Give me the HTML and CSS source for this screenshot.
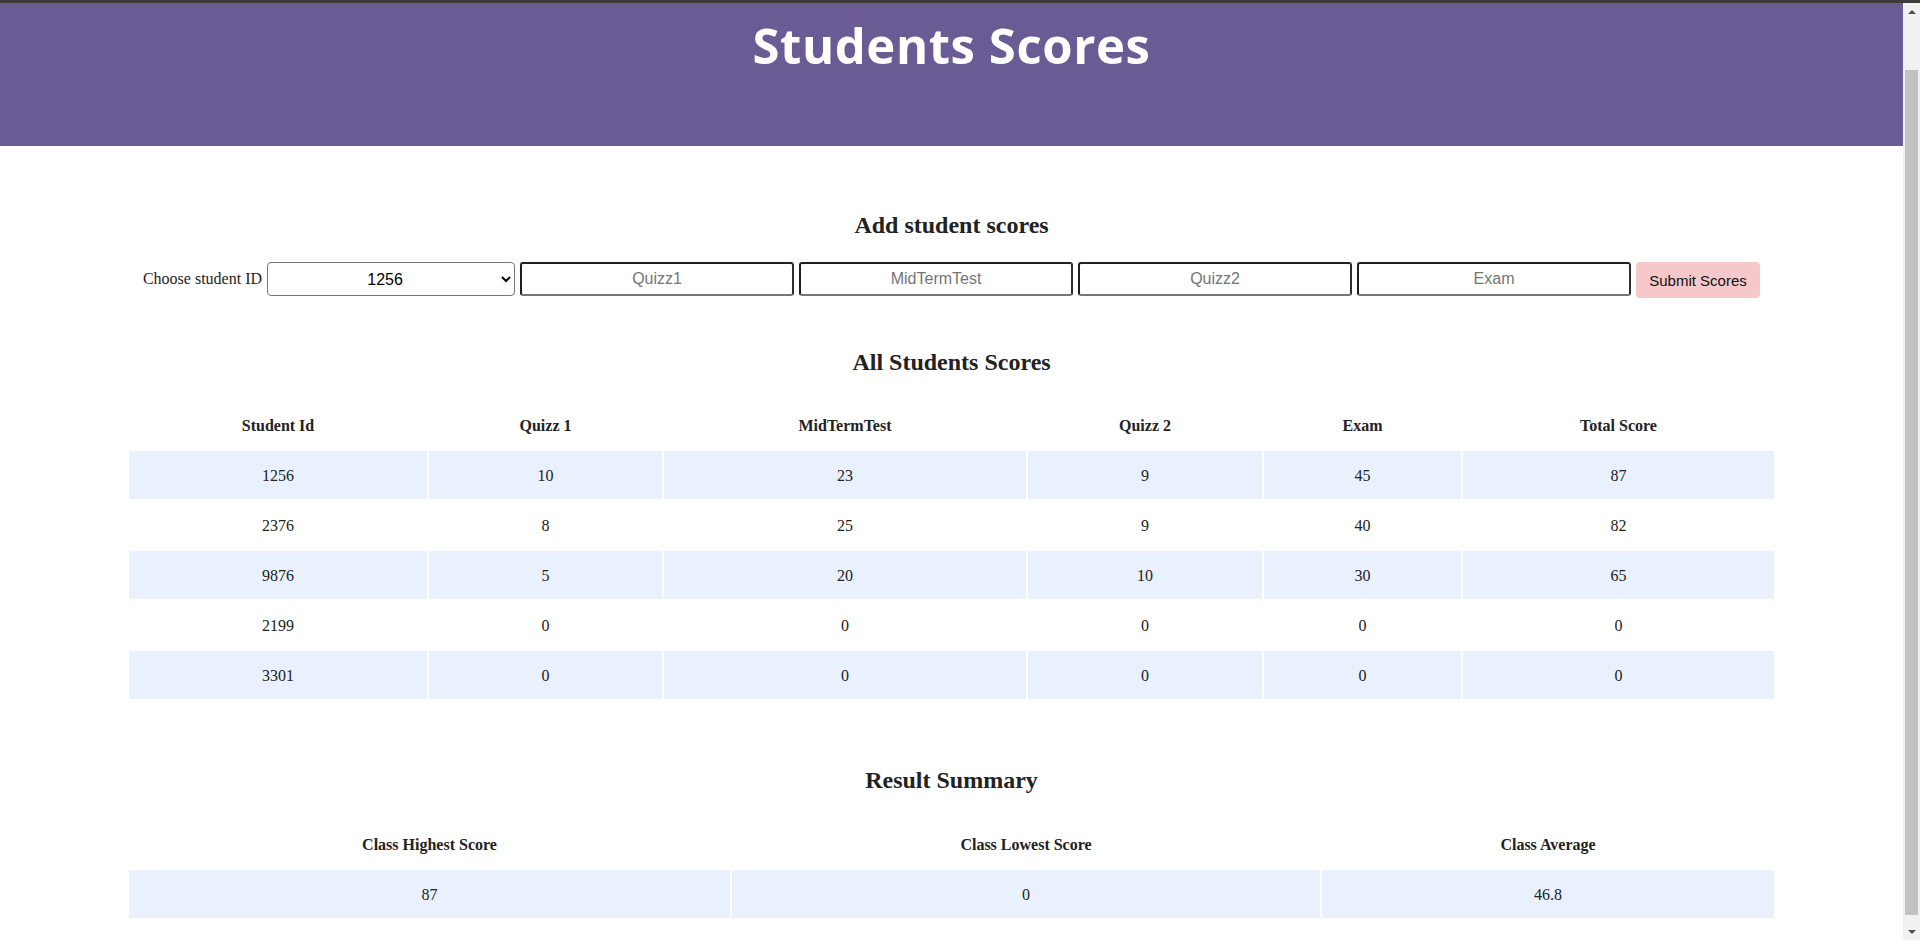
FILE: index.html
```html
<!DOCTYPE html>
<html lang="en">
<head>
<meta charset="utf-8">
<title>Students Scores</title>
<link rel="stylesheet" href="styles.css">
</head>
<body>
<div class="topbar"></div>
<div class="frame">
  <div class="page">
    <header class="banner">
      <h1 class="banner-title">Students Scores</h1>
    </header>
    <main class="content">
      <h2 class="section-title first">Add student scores</h2>
      <form class="score-form">
        <label class="form-label" for="sid">Choose student ID</label>
        <select id="sid" class="form-select">
          <option>1256</option>
          <option>2376</option>
          <option>9876</option>
          <option>2199</option>
          <option>3301</option>
        </select>
        <input class="form-input" type="text" placeholder="Quizz1">
        <input class="form-input" type="text" placeholder="MidTermTest">
        <input class="form-input" type="text" placeholder="Quizz2">
        <input class="form-input" type="text" placeholder="Exam">
        <button class="form-button" type="button">Submit Scores</button>
      </form>

      <h2 class="section-title second">All Students Scores</h2>
      <table class="data-table scores">
        <thead>
          <tr>
            <th class="c1">Student Id</th>
            <th class="c2">Quizz 1</th>
            <th class="c3">MidTermTest</th>
            <th class="c4">Quizz 2</th>
            <th class="c5">Exam</th>
            <th class="c6">Total Score</th>
          </tr>
        </thead>
        <tbody>
          <tr><td>1256</td><td>10</td><td>23</td><td>9</td><td>45</td><td>87</td></tr>
          <tr><td>2376</td><td>8</td><td>25</td><td>9</td><td>40</td><td>82</td></tr>
          <tr><td>9876</td><td>5</td><td>20</td><td>10</td><td>30</td><td>65</td></tr>
          <tr><td>2199</td><td>0</td><td>0</td><td>0</td><td>0</td><td>0</td></tr>
          <tr><td>3301</td><td>0</td><td>0</td><td>0</td><td>0</td><td>0</td></tr>
        </tbody>
      </table>

      <h2 class="section-title third">Result Summary</h2>
      <table class="data-table summary">
        <thead>
          <tr>
            <th class="s1">Class Highest Score</th>
            <th class="s2">Class Lowest Score</th>
            <th class="s3">Class Average</th>
          </tr>
        </thead>
        <tbody>
          <tr><td>87</td><td>0</td><td>46.8</td></tr>
        </tbody>
      </table>
    </main>
  </div>
  <div class="scrollbar">
    <div class="sb-btn"><span class="sb-up"></span></div>
    <div class="sb-track"><div class="sb-thumb"></div></div>
    <div class="sb-btn"><span class="sb-down"></span></div>
  </div>
</div>
</body>
</html>
```

FILE: styles.css
```css
html, body {
  margin: 0;
  padding: 0;
  height: 100%;
  overflow: hidden;
  background: #ffffff;
}

body {
  font-family: "Liberation Serif", "Times New Roman", serif;
  font-size: 16px;
  color: #222222;
  display: flex;
  flex-direction: column;
}

.topbar {
  height: 3px;
  background: #3b3b3b;
  flex: none;
}

.frame {
  flex: 1;
  display: flex;
  min-height: 0;
}

.page {
  flex: 1;
  min-width: 0;
}

.banner {
  height: 143px;
  background: #6b5b95;
  padding-top: 9px;
  box-sizing: border-box;
}

.banner-title {
  margin: 0;
  text-align: center;
  color: #ffffff;
  font-family: "Open Sans", "DejaVu Sans", sans-serif;
  font-weight: 700;
  font-size: 49px;
  line-height: 66px;
  letter-spacing: 0.6px;
}

.content {
  display: flex;
  flex-direction: column;
  align-items: center;
}

.section-title {
  margin: 0;
  font-size: 24px;
  line-height: 28px;
  font-weight: 700;
  text-align: center;
}

.section-title.first { margin-top: 65px; }
.section-title.second { margin-top: 50px; }
.section-title.third { margin-top: 65px; }

.score-form {
  margin-top: 23px;
  display: flex;
  justify-content: center;
  align-items: flex-start;
  gap: 5px;
}

.form-label {
  line-height: 34px;
  font-size: 16px;
}

.form-select {
  width: 248px;
  height: 34px;
  box-sizing: border-box;
  border: 1px solid #767676;
  border-radius: 4px;
  background: #ffffff;
  font-family: "Liberation Sans", Arial, sans-serif;
  font-size: 16px;
  color: #000000;
  text-align: center;
  text-align-last: center;
  padding: 0 4px;
}

.form-input {
  width: 274px;
  height: 34px;
  box-sizing: border-box;
  border-style: solid;
  border-width: 2px;
  border-color: #1f1f1f #2e2e2e #767676 #1f1f1f;
  border-radius: 3px;
  background: #ffffff;
  font-family: "Liberation Sans", Arial, sans-serif;
  font-size: 16px;
  text-align: center;
  padding: 0 4px;
}

.form-input::placeholder {
  color: #757575;
}

.form-button {
  width: 124px;
  height: 36px;
  border: none;
  border-radius: 4px;
  background: #f7c8c9;
  color: #111111;
  font-family: "Liberation Sans", Arial, sans-serif;
  font-size: 15px;
  padding: 0;
}

.data-table {
  border-spacing: 2px;
  table-layout: fixed;
  width: 1649px;
  margin-top: 23px;
}

.data-table.summary {
  margin-top: 24px;
}

.data-table th,
.data-table td {
  height: 47px;
  padding: 1px 0 0 0;
  text-align: center;
  vertical-align: middle;
  font-size: 16px;
}

.data-table th {
  font-weight: 700;
}

.data-table tbody tr:nth-child(odd) td {
  background: #e8f1fd;
}

.c1 { width: 298px; }
.c2 { width: 233px; }
.c3 { width: 362px; }
.c4 { width: 234px; }
.c5 { width: 197px; }
.c6 { width: 311px; }

.s1 { width: 601px; }
.s2 { width: 588px; }
.s3 { width: 452px; }

.scrollbar {
  width: 17px;
  flex: none;
  background: #f1f1f1;
  display: flex;
  flex-direction: column;
}

.sb-btn {
  height: 17px;
  display: flex;
  align-items: center;
  justify-content: center;
  flex: none;
}

.sb-up {
  width: 0;
  height: 0;
  border-left: 4px solid transparent;
  border-right: 4px solid transparent;
  border-bottom: 4px solid #505050;
}

.sb-down {
  width: 0;
  height: 0;
  border-left: 4px solid transparent;
  border-right: 4px solid transparent;
  border-top: 4px solid #505050;
}

.sb-track {
  flex: 1;
  padding: 50px 2px 8px 2px;
  box-sizing: border-box;
  display: flex;
}

.sb-thumb {
  flex: 1;
  background: #c1c1c1;
}
```
